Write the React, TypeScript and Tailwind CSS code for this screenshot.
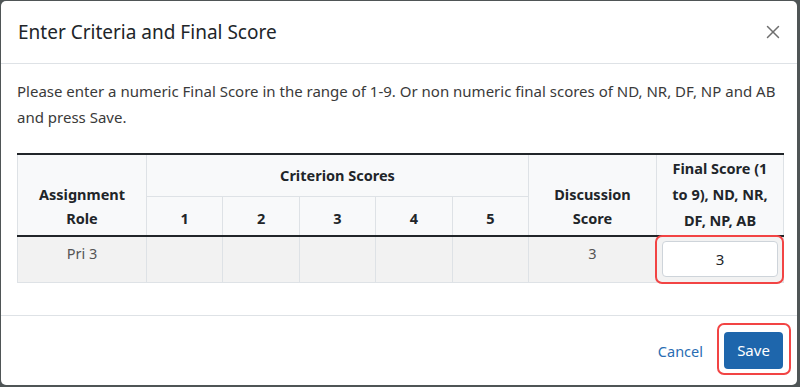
import { X } from "lucide-react";

const crit = ["1", "2", "3", "4", "5"];

export default function App() {
    return (
        <div className="w-[800px] h-[387px] bg-[#4f5556] pt-[1px] pl-[1px] pr-[3px] pb-[2px] font-['Noto_Sans','Open_Sans',sans-serif]">
            <div className="h-full flex flex-col bg-white rounded-[5px] overflow-hidden">
                {/* Header */}
                <div className="h-[63px] shrink-0 flex items-center justify-between pl-[17px] pr-[13px] border-b border-[#dee2e6]">
                    <h1 className="text-[19px] text-[#212529]">Enter Criteria and Final Score</h1>
                    <button className="text-[#6f6f6f]">
                        <X className="w-[22px] h-[22px]" strokeWidth={1.6} />
                    </button>
                </div>

                {/* Body */}
                <div className="flex-1 px-[16px] pt-[14px]">
                    <p className="text-[15px] leading-[26px] text-[#3a3a3a]">
                        Please enter a numeric Final Score in the range of 1-9. Or non numeric final scores of ND, NR, DF, NP and AB and press Save.
                    </p>

                    <table className="mt-[23px] w-[766px] table-fixed border-collapse text-[14.5px] text-[#212529]">
                        <colgroup>
                            <col className="w-[129px]" />
                            {crit.map((c) => (
                                <col key={c} className="w-[76.4px]" />
                            ))}
                            <col className="w-[128px]" />
                            <col className="w-[127px]" />
                        </colgroup>
                        <thead className="bg-[#f8f9fa]">
                            <tr className="border-t-2 border-[#212529]">
                                <th rowSpan={2} className="border border-t-0 border-[#dee2e6] font-bold leading-[24px] align-bottom pb-[5px]">
                                    Assignment<br />Role
                                </th>
                                <th colSpan={5} className="h-[39px] border border-t-0 border-[#dee2e6] font-bold">
                                    Criterion Scores
                                </th>
                                <th rowSpan={2} className="border border-t-0 border-[#dee2e6] font-bold leading-[24px] align-bottom pb-[5px]">
                                    Discussion<br />Score
                                </th>
                                <th rowSpan={2} className="border border-t-0 border-[#dee2e6] font-bold leading-[26px] align-bottom pb-[2px] px-[8px]">
                                    Final Score (1 to 9), ND, NR, DF, NP, AB
                                </th>
                            </tr>
                            <tr className="border-b-2 border-[#212529]">
                                {crit.map((c) => (
                                    <th key={c} className="h-[36px] border border-b-0 border-[#dee2e6] font-bold align-bottom pb-[5px]">
                                        {c}
                                    </th>
                                ))}
                            </tr>
                        </thead>
                        <tbody>
                            <tr className="bg-[#f2f2f2] text-[#555]">
                                <td className="h-[46px] border border-t-0 border-[#dee2e6] text-center align-top pt-[6px]">Pri 3</td>
                                {crit.map((c) => (
                                    <td key={c} className="border border-t-0 border-[#dee2e6]" />
                                ))}
                                <td className="border border-t-0 border-[#dee2e6] text-center align-top pt-[6px]">3</td>
                                <td className="relative border border-t-0 border-[#dee2e6] bg-[#f2f2f2] align-top pt-[4px] pl-[5px] pr-[5px]">
                                    <input
                                        defaultValue="3"
                                        className="w-full h-[36px] bg-white border border-[#ced4da] rounded-[4px] text-center text-[15px] text-[#212529]"
                                    />
                                    <span className="absolute left-[-2px] right-[-1px] top-[-2px] bottom-[-2px] border-[2.5px] border-[#f24444] rounded-[7px] pointer-events-none" />
                                </td>
                            </tr>
                        </tbody>
                    </table>
                </div>

                {/* Footer */}
                <div className="h-[70px] shrink-0 flex items-center justify-end gap-[21px] pr-[14px] border-t border-[#dee2e6]">
                    <a className="text-[14.5px] text-[#2a6db3] mt-[2px]">Cancel</a>
                    <div className="relative">
                        <button className="h-[37px] w-[59px] rounded-[4px] bg-[#1e66ac] text-white text-[15px]">Save</button>
                        <span className="absolute left-[-7px] right-[-8px] top-[-9px] bottom-[-6px] border-[2.5px] border-[#f24444] rounded-[7px] pointer-events-none" />
                    </div>
                </div>
            </div>
        </div>
    );
}
